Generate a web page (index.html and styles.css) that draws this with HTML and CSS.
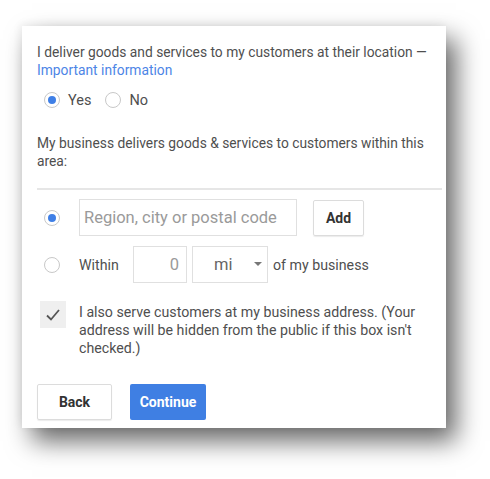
FILE: index.html
```html
<!DOCTYPE html>
<html>
<head>
<meta charset="utf-8">
<link rel="stylesheet" href="styles.css">
</head>
<body>
<div class="stage">
  <div class="card">
    <p class="lead">I deliver goods and services to my customers at their location — <a class="link" href="#">Important information</a></p>
    <div class="choices">
      <label class="choice"><span class="radio on"></span>Yes</label>
      <label class="choice"><span class="radio"></span>No</label>
    </div>
    <p class="area">My business delivers goods &amp; services to customers within this area:</p>
    <div class="divider"></div>
    <div class="row row-region">
      <span class="radio on"></span>
      <div class="field region">Region, city or postal code</div>
      <div class="btn add">Add</div>
    </div>
    <div class="row row-within">
      <span class="radio"></span>
      <span class="within">Within</span>
      <div class="field num">0</div>
      <div class="field unit"><span>mi</span><span class="caret"></span></div>
      <span class="suffix">of my business</span>
    </div>
    <div class="check-row">
      <span class="checkbox">
        <svg width="16" height="14" viewBox="0 0 16 14"><path d="M2 7.5 L6 11.5 L14 2" fill="none" stroke="#555" stroke-width="1.8"/></svg>
      </span>
      <p class="check-text">I also serve customers at my business address. (Your address will be hidden from the public if this box isn't checked.)</p>
    </div>
    <div class="actions">
      <div class="btn back">Back</div>
      <div class="btn primary">Continue</div>
    </div>
  </div>
</div>
</body>
</html>
```

FILE: styles.css
```css
html, body {
  margin: 0;
  padding: 0;
  background: #ffffff;
}
body {
  font-family: Roboto, "Liberation Sans", Arial, sans-serif;
  color: #4f4f4f;
  font-size: 13.8px;
}
.stage {
  padding: 26px 0 51px 22px;
}
.card {
  box-sizing: border-box;
  width: 424px;
  height: 402px;
  background: #fff;
  padding: 17px 0 0 15px;
  box-shadow: 10px 13px 24px rgba(0,0,0,0.6), -2px -2px 8px rgba(0,0,0,0.06);
}
p { margin: 0; }
.lead {
  line-height: 18px;
  width: 400px;
}
.link {
  color: #4d85e6;
  text-decoration: none;
}
.choices {
  display: flex;
  align-items: center;
  gap: 14px;
  margin-top: 12px;
  padding-left: 7px;
  height: 18px;
}
.choice {
  display: flex;
  align-items: center;
  gap: 8px;
  font-size: 14.5px;
}
.radio {
  box-sizing: border-box;
  width: 16px;
  height: 16px;
  border-radius: 50%;
  border: 1px solid #c8c8c8;
  background: #fff;
  display: inline-flex;
  align-items: center;
  justify-content: center;
  flex: none;
}
.radio.on::after {
  content: "";
  width: 8px;
  height: 8px;
  border-radius: 50%;
  background: #3f7fe6;
}
.area {
  margin-top: 25px;
  line-height: 18px;
  width: 400px;
}
.divider {
  margin-top: 18px;
  margin-right: 4px;
  height: 2px;
  background: #e6e6e6;
}
.row {
  display: flex;
  align-items: center;
  padding-left: 7px;
}
.row .radio { margin-right: 19px; }
.row-region {
  margin-top: 9px;
  height: 37px;
}
.field {
  box-sizing: border-box;
  border: 1px solid #e0e0e0;
  height: 37px;
  display: flex;
  align-items: center;
}
.region {
  width: 218px;
  padding-left: 4px;
  font-size: 16.5px;
  color: #9a9a9a;
}
.btn {
  box-sizing: border-box;
  display: flex;
  align-items: center;
  justify-content: center;
  font-weight: bold;
  font-size: 14px;
  border-radius: 2px;
}
.add {
  margin-left: 16px;
  width: 51px;
  height: 36px;
  border: 1px solid #dcdcdc;
  color: #333;
  box-shadow: 0 1px 1px rgba(0,0,0,0.08);
}
.row-within {
  margin-top: 10px;
  height: 37px;
}
.within {
  width: 54px;
  font-size: 14.2px;
}
.num {
  width: 54px;
  justify-content: flex-end;
  padding-right: 7px;
  font-size: 16.5px;
  color: #9a9a9a;
}
.unit {
  margin-left: 5px;
  width: 76px;
  padding-left: 21px;
  font-size: 16.5px;
  color: #666;
  position: relative;
}
.caret {
  position: absolute;
  left: 61px;
  top: 15px;
  width: 0;
  height: 0;
  border-left: 4px solid transparent;
  border-right: 4px solid transparent;
  border-top: 4px solid #777;
}
.suffix {
  margin-left: 5px;
  font-size: 14.2px;
}
.check-row {
  display: flex;
  align-items: flex-start;
  margin-top: 18px;
  padding-left: 3px;
}
.checkbox {
  box-sizing: border-box;
  width: 26px;
  height: 27px;
  background: #efefef;
  display: flex;
  align-items: center;
  justify-content: center;
  flex: none;
  margin-right: 13px;
}
.check-text {
  margin-top: 2px;
  line-height: 18px;
  width: 345px;
  font-size: 14.2px;
}
.actions {
  display: flex;
  gap: 18px;
  margin-top: 27px;
}
.back {
  width: 75px;
  height: 36px;
  border: 1px solid #dcdcdc;
  color: #333;
  box-shadow: 0 1px 1px rgba(0,0,0,0.08);
}
.primary {
  width: 76px;
  height: 36px;
  background: #3f7fe3;
  color: #fff;
}
```
